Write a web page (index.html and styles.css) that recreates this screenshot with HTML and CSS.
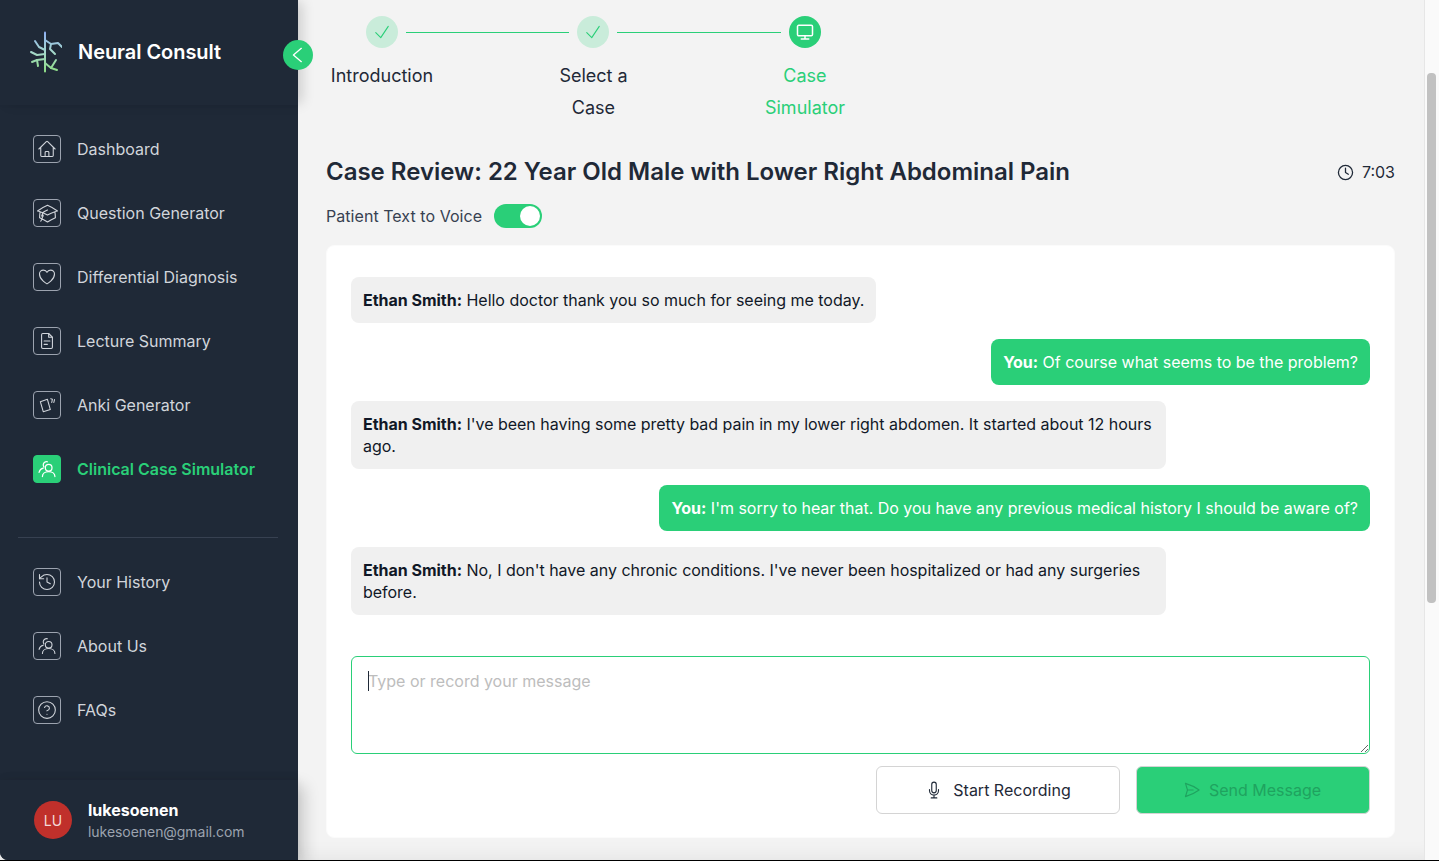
FILE: index.html
```html
<!DOCTYPE html>
<html lang="en">
<head>
<meta charset="utf-8">
<title>Neural Consult</title>
<link rel="stylesheet" href="styles.css">
</head>
<body>
<div class="app">
  <aside class="sidebar">
    <div class="brand">
      <svg class="logo" viewBox="28 31 34 42" fill="none" stroke="url(#tree)" stroke-width="2" stroke-linecap="round" stroke-linejoin="round">
        <defs><linearGradient id="tree" gradientUnits="userSpaceOnUse" x1="45" y1="32" x2="45" y2="72"><stop offset="0" stop-color="#8fb0f2"/><stop offset=".5" stop-color="#a5d8cc"/><stop offset="1" stop-color="#8edd85"/></linearGradient></defs>
        <path d="M45 32.500v39"/><path d="M35 41l4 6 6 3"/><path d="M45 40l6 4 7-1 4 4"/><path d="M51 44l-1 5 5 5"/><path d="M45 54l-8 1-6-3"/><path d="M45 59l-8 1-5 2"/><path d="M37 60l1 6"/><path d="M45 63l6 5 5-8"/><path d="M51 68l6 2"/>
      </svg>
      <span class="brand-name">Neural Consult</span>
      <button class="collapse" aria-label="Collapse sidebar"><svg viewBox="0 0 24 24" fill="none" stroke="currentColor" stroke-width="1.600" stroke-linecap="round" stroke-linejoin="round"><path d="M16 4l-9.500 8 9.500 8"/></svg></button>
    </div>
    <nav class="nav">
      <a class="item"><span class="ico"><svg viewBox="0 0 24 24"><path d="M2.250 12l8.954-8.955c.44-.439 1.152-.439 1.591 0L21.750 12M4.500 9.750v10.125c0 .621.504 1.125 1.125 1.125H9.750v-4.875c0-.621.504-1.125 1.125-1.125h2.250c.621 0 1.125.504 1.125 1.125V21h4.125c.621 0 1.125-.504 1.125-1.125V9.750M8.250 21h8.250"/></svg></span>Dashboard</a>
      <a class="item"><span class="ico ico-cap"><svg viewBox="0 0 24 24"><path d="M4.260 10.147a60.438 60.438 0 00-.491 6.347A48.620 48.620 0 0112 20.904a48.620 48.620 0 018.232-4.410 60.460 60.460 0 00-.491-6.347m-15.482 0a50.636 50.636 0 00-2.658-.813A59.906 59.906 0 0112 3.493a59.903 59.903 0 0110.399 5.840c-.896.248-1.783.520-2.658.814m-15.482 0A50.717 50.717 0 0112 13.489a50.702 50.702 0 017.740-3.342M6.750 15a.750.750 0 100-1.500.750.750 0 000 1.500zm0 0v-3.675A55.378 55.378 0 0112 8.443m-7.007 11.550A5.981 5.981 0 006.750 15.750v-1.500"/></svg></span>Question Generator</a>
      <a class="item"><span class="ico"><svg viewBox="0 0 24 24"><path d="M21 8.250c0-2.485-2.099-4.500-4.688-4.500-1.935 0-3.597 1.126-4.312 2.733-.715-1.607-2.377-2.733-4.313-2.733C5.100 3.750 3 5.765 3 8.250c0 7.220 9 12 9 12s9-4.780 9-12z"/></svg></span>Differential Diagnosis</a>
      <a class="item"><span class="ico"><svg viewBox="0 0 24 24"><path d="M14 3H7a1.500 1.500 0 0 0-1.500 1.500v15A1.500 1.500 0 0 0 7 21h10a1.500 1.500 0 0 0 1.500-1.500V7.500z"/><path d="M14 3v4.500h4.500"/><path d="M8.500 12h7M8.500 16h4"/></svg></span>Lecture Summary</a>
      <a class="item"><span class="ico"><svg viewBox="0 0 24 24"><path d="M4 8l8.500-2.800 3.500 12.300-8.500 2.500z"/><path d="M16.500 4.500l2 .5-.8 4M21 5.500l-.8 3.500"/></svg></span>Anki Generator</a>
      <a class="item active"><span class="ico"><svg viewBox="0 0 24 24"><circle cx="14" cy="10.500" r="4"/><path d="M6.500 21c0-3.500 3.200-6 7.500-6s7.500 2.500 7.500 6"/><path d="M12.500 3.300A4 4 0 0 0 7.500 7c0 1 .3 1.800.8 2.500M2.500 16c.6-2.500 2.500-4.500 5-5"/></svg></span>Clinical Case Simulator</a>
    </nav>
    <div class="divider"></div>
    <nav class="nav nav-lower">
      <a class="item"><span class="ico"><svg viewBox="0 0 24 24"><path d="M3 12a9 9 0 1 0 9-9 9.750 9.750 0 0 0-6.740 2.740L3 8"/><path d="M3 3v5h5"/><path d="M12 7v5l4 2"/></svg></span>Your History</a>
      <a class="item"><span class="ico"><svg viewBox="0 0 24 24"><circle cx="14" cy="10.500" r="4"/><path d="M6.500 21c0-3.500 3.200-6 7.500-6s7.500 2.500 7.500 6"/><path d="M12.500 3.300A4 4 0 0 0 7.500 7c0 1 .3 1.800.8 2.500M2.500 16c.6-2.500 2.500-4.500 5-5"/></svg></span>About Us</a>
      <a class="item"><span class="ico"><svg viewBox="0 0 24 24"><circle cx="12" cy="12" r="10"/><path d="M9.090 9a3 3 0 0 1 5.830 1c0 2-3 3-3 3"/><path d="M12 17h.01"/></svg></span>FAQs</a>
    </nav>
    <div class="user">
      <div class="avatar">LU</div>
      <div class="user-text">
        <div class="user-name">lukesoenen</div>
        <div class="user-mail">lukesoenen@gmail.com</div>
      </div>
    </div>
  </aside>

  <main class="main">
    <div class="track">
      <span class="dot done"><svg viewBox="0 0 24 24"><path d="M4.500 12.750l6 6 9-13.500"/></svg></span>
      <span class="line line-a"></span>
      <span class="dot done"><svg viewBox="0 0 24 24"><path d="M4.500 12.750l6 6 9-13.500"/></svg></span>
      <span class="line line-b"></span>
      <span class="dot current"><svg viewBox="0 0 24 24"><rect x="3" y="4" width="18" height="12.500" rx="1.500"/><path d="M12 16.500v3.500M7.500 20.500h9"/></svg></span>
    </div>
    <div class="labels">
      <span class="label">Introduction</span>
      <span class="label">Select a Case</span>
      <span class="label current-label">Case Simulator</span>
    </div>
    <div class="title-row">
      <h1>Case Review: 22 Year Old Male with Lower Right Abdominal Pain</h1>
      <div class="timer"><svg viewBox="0 0 24 24"><circle cx="12" cy="12" r="10"/><path d="M12 6v6l4 2.500"/></svg>7:03</div>
    </div>
    <div class="voice">
      <span>Patient Text to Voice</span>
      <span class="switch"><span class="knob"></span></span>
    </div>
    <section class="card">
      <div class="messages">
        <div class="msg bot"><b>Ethan Smith:</b> Hello doctor thank you so much for seeing me today.</div>
        <div class="msg me"><b>You:</b> Of course what seems to be the problem?</div>
        <div class="msg bot"><b>Ethan Smith:</b> I've been having some pretty bad pain in my lower right abdomen. It started about 12 hours ago.</div>
        <div class="msg me"><b>You:</b> I'm sorry to hear that. Do you have any previous medical history I should be aware of?</div>
        <div class="msg bot"><b>Ethan Smith:</b> No, I don't have any chronic conditions. I've never been hospitalized or had any surgeries before.</div>
      </div>
      <div class="input-wrap">
        <textarea class="input" placeholder="Type or record your message"></textarea>
        <span class="caret"></span>
      </div>
      <div class="actions">
        <button class="btn record"><svg viewBox="0 0 24 24"><path d="M12 18.750a6 6 0 006-6v-1.500m-6 7.500a6 6 0 01-6-6v-1.500m6 7.500v3.750m-3.750 0h7.500M12 15.750a3 3 0 01-3-3V4.500a3 3 0 116 0v8.250a3 3 0 01-3 3z"/></svg>Start Recording</button>
        <button class="btn send"><svg viewBox="0 0 24 24"><path d="M6 12L3.269 3.126A59.768 59.768 0 0121.485 12 59.770 59.770 0 013.270 20.876L5.999 12zm0 0h7.500"/></svg>Send Message</button>
      </div>
    </section>
  </main>
  <div class="scrollbar"><div class="thumb"></div></div>
</div>
</body>
</html>
```
FILE: styles.css
```css
* { box-sizing: border-box; }
html, body { margin: 0; height: 100%; overflow: hidden; }
body { background: #000; font-family: Inter, "Liberation Sans", sans-serif; color: #1f2937; }
.app { display: flex; height: 860px; background: #f3f3f3; }

/* Sidebar */
.sidebar { width: 298px; flex: none; display: flex; flex-direction: column; background: #1f2937; border-bottom-left-radius: 8px; position: relative; z-index: 2; }
.brand { height: 105px; display: flex; align-items: center; gap: 16px; padding-left: 28px; position: relative; box-shadow: 6px 0 12px -2px rgba(0,0,0,.16), 0 1px 4px rgba(0,0,0,.02); background: #1f2937; }
.logo { width: 34px; height: 42px; flex: none; margin-top: -1px; }
.brand-name { color: #fff; font-size: 20px; font-weight: 600; margin-top: -1px; letter-spacing: -.05px; }
.collapse { position: absolute; left: 283px; top: 40px; width: 30px; height: 30px; border: 0; border-radius: 50%; background: #2acf78; color: #fff; padding: 5px; display: flex; }
.collapse svg { width: 20px; height: 20px; }
.nav { display: flex; flex-direction: column; gap: 36px; padding: 30px 0 0 33px; }
.nav-lower { padding-top: 30px; }
.item { display: flex; align-items: center; gap: 16px; height: 28px; font-size: 16px; font-weight: 400; color: #d1d5db; }
.ico { width: 28px; height: 28px; flex: none; border: 1px solid #9ca3af; border-radius: 4px; display: flex; align-items: center; justify-content: center; }
.ico svg { width: 20px; height: 20px; fill: none; stroke: #d1d5db; stroke-width: 1.300; stroke-linecap: round; stroke-linejoin: round; }
.ico-cap svg { width: 23px; height: 23px; stroke-width: 1.200; }
.active { color: #2acf78; font-weight: 600; }
.active .ico { background: #2acf78; border-color: #2acf78; }
.active .ico svg { stroke: #fff; stroke-width: 1.500; }
.divider { height: 1px; margin: 54px 20px 0 18px; background: #374151; }
.user { margin-top: auto; height: 80px; display: flex; align-items: center; gap: 16px; padding-left: 34px; background: #1f2937; box-shadow: 0 -2px 8px rgba(0,0,0,.05), 6px 6px 16px rgba(0,0,0,.18); border-bottom-left-radius: 8px; }
.avatar { width: 38px; height: 38px; border-radius: 50%; background: #c0302b; color: #f3d9d8; font-size: 14px; display: flex; align-items: center; justify-content: center; }
.user-text { padding-top: 2px; }
.user-name { color: #fff; font-size: 16px; font-weight: 700; line-height: 22px; }
.user-mail { color: #9ca3af; font-size: 14px; line-height: 22px; letter-spacing: -.05px; }

/* Main column */
.main { flex: 1; min-width: 0; padding: 16px 29px 0 28px; box-shadow: inset 0 -20px 20px -18px rgba(0,0,0,.07); }
.track { display: flex; align-items: center; gap: 8px; padding-left: 40px; }
.dot { width: 32px; height: 32px; flex: none; border-radius: 50%; display: flex; align-items: center; justify-content: center; }
.dot svg { width: 20px; height: 20px; fill: none; stroke-width: 1.300; stroke-linecap: round; stroke-linejoin: round; }
.done { background: #c9ecda; }
.done svg { stroke: #2acf78; }
.current { background: #2acf78; }
.current svg { stroke: #fff; stroke-width: 1.800; }
.line { flex: none; height: 1px; background: #2acf78; }
.line-a { width: 163px; }
.line-b { width: 164px; }
.labels { display: flex; gap: 105.500px; padding: 12px 0 0 3px; }
.label { width: 106px; flex: none; font-size: 18px; line-height: 32px; text-align: center; color: #1f2937; }
.current-label { color: #2acf78; }
.title-row { display: flex; align-items: center; justify-content: space-between; margin-top: 32px; }
h1 { margin: 0; font-size: 24px; line-height: 32px; font-weight: 600; color: #1f2937; letter-spacing: -.01px; }
.timer { display: flex; align-items: center; gap: 8px; font-size: 16px; }
.timer svg { width: 17px; height: 17px; fill: none; stroke: #1f2937; stroke-width: 1.800; stroke-linecap: round; stroke-linejoin: round; }
.voice { display: flex; align-items: center; gap: 12px; margin-top: 16px; height: 24px; font-size: 16px; color: #374151; }
.voice span:first-child { letter-spacing: .05px; }
.switch { width: 48px; height: 24px; border-radius: 12px; background: #2acf78; display: flex; justify-content: flex-end; align-items: center; padding-right: 2px; }
.knob { width: 20px; height: 20px; border-radius: 50%; background: #fff; }

/* Chat card */
.card { margin-top: 17px; height: 593px; padding: 31px 24px 0; background: #fff; border: 1px solid #fbfbfb; border-radius: 8px; }
.messages { display: flex; flex-direction: column; gap: 16px; align-items: flex-start; }
.msg { max-width: 815px; padding: 12px; border-radius: 8px; font-size: 16px; line-height: 22px; color: #111827; letter-spacing: -.02px; }
.msg b { font-weight: 700; }
.bot { background: #f0f0f0; }
.me { align-self: flex-end; background: #2acf78; color: #fff; }
.input-wrap { position: relative; margin-top: 41px; height: 98px; }
.input { display: block; width: 100%; height: 98px; padding: 12px 16px; border: 1px solid #2acf78; border-radius: 6px; outline: 0; resize: vertical; font-family: inherit; font-size: 16px; line-height: 24px; background: #fff; }
.input::placeholder { color: #bdbdbd; opacity: 1; }
.caret { position: absolute; left: 17px; top: 15px; width: 1px; height: 20px; background: #1f2937; }
.actions { display: flex; justify-content: flex-end; gap: 16px; margin-top: 12px; }
.btn { height: 48px; display: flex; align-items: center; justify-content: center; gap: 10px; border: 1px solid #d4d4d4; border-radius: 6px; font-family: inherit; font-size: 16px; padding: 0; }
.btn svg { width: 18px; height: 18px; fill: none; stroke-width: 1.500; stroke-linecap: round; stroke-linejoin: round; }
.record { width: 244px; background: #fff; color: #1f2937; }
.record svg { stroke: #1f2937; }
.send { width: 234px; gap: 8px; padding-right: 2px; background: #2acf78; color: #1fa35f; }
.send svg { stroke: #1fa35f; }

/* Scrollbar column */
.scrollbar { width: 15px; flex: none; background: #fafafa; border-left: 1px solid #e6e6e6; padding: 73px 3px 0 2px; }
.thumb { height: 530px; border-radius: 4px; background: #c1c1c1; }
```
